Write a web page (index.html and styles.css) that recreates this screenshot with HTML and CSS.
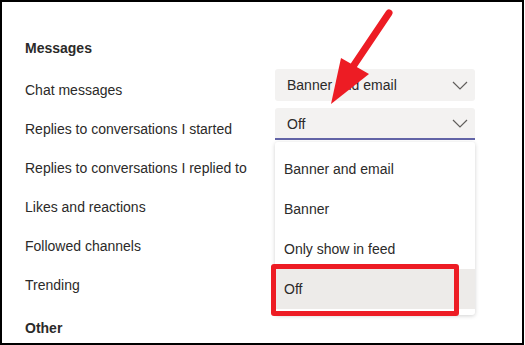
FILE: index.html
```html
<!DOCTYPE html>
<html lang="en">
<head>
    <meta charset="UTF-8">
    <meta name="viewport" content="width=device-width, initial-scale=1.0">
    <title>Notifications</title>
    <link rel="stylesheet" href="styles.css">
</head>
<body>

    <div class="frame">
        <h2 class="section-title">Messages</h2>

        <div class="row">
            <span class="label">Chat messages</span>
            <div class="select">
                <span>Banner and email</span>
                <svg class="chevron" viewBox="0 0 16 9"><path d="M1 1l7 7 7-7"/></svg>
            </div>
        </div>
        <div class="row">
            <span class="label">Replies to conversations I started</span>
            <div class="select open">
                <span>Off</span>
                <svg class="chevron" viewBox="0 0 16 9"><path d="M1 1l7 7 7-7"/></svg>
                <ul class="menu">
                    <li>Banner and email</li>
                    <li>Banner</li>
                    <li>Only show in feed</li>
                    <li class="hover">Off</li>
                </ul>
            </div>
        </div>
        <div class="row"><span class="label">Replies to conversations I replied to</span></div>
        <div class="row"><span class="label">Likes and reactions</span></div>
        <div class="row"><span class="label">Followed channels</span></div>
        <div class="row"><span class="label">Trending</span></div>

        <h2 class="section-title other">Other</h2>

        <!-- annotations -->
        <div class="mark"></div>
        <svg class="arrow" viewBox="0 0 524 345">
            <line x1="389" y1="13" x2="352" y2="68"/>
            <polygon points="341,58 369,74 331,104"/>
        </svg>
    </div>

</body>
</html>
```

FILE: styles.css
```css
body {
    margin: 0;
    font-family: "Liberation Sans", Arial, sans-serif;
    font-size: 14px;
    color: #2b2a29;
    background: #fff;
}
.frame {
    position: relative;
    box-sizing: border-box;
    width: 524px;
    height: 345px;
    border: 2px solid #000;
    padding: 0 0 0 23px;
    overflow: hidden;
}
.section-title {
    margin: 0;
    padding-top: 38px;
    height: 29px;
    font-size: 14px;
    font-weight: bold;
    line-height: 16px;
}
.section-title.other {
    padding-top: 17px;
}
.row {
    display: flex;
    align-items: flex-start;
    height: 39px;
}
.label {
    width: 250px;
    padding-top: 13px;
    line-height: 16px;
    white-space: nowrap;
}
.select {
    position: relative;
    box-sizing: border-box;
    display: flex;
    align-items: center;
    justify-content: space-between;
    width: 200px;
    height: 32px;
    padding: 0 7px 0 12px;
    background: #f3f2f1;
    border-radius: 3px;
}
.select.open {
    border-bottom: 2px solid #6264a7;
    border-radius: 3px 3px 0 0;
    padding-top: 1px;
}
.chevron {
    width: 16px;
    height: 9px;
    fill: none;
    stroke: #605e5c;
    stroke-width: 1.2;
}
.menu {
    position: absolute;
    top: 34px;
    left: 0;
    width: 200px;
    margin: 0;
    padding: 7px 0 6px;
    list-style: none;
    background: #fff;
    border-radius: 3px;
    box-shadow: 0 1px 4px rgba(0, 0, 0, 0.18);
    z-index: 1;
}
.menu li {
    height: 40px;
    line-height: 40px;
    padding-left: 9px;
}
.menu li.hover {
    background: #edebe9;
}
.mark {
    position: absolute;
    left: 269px;
    top: 262px;
    width: 188px;
    height: 52px;
    box-sizing: border-box;
    border: 5px solid #ed1c24;
    border-radius: 3px;
    z-index: 2;
}
.arrow {
    position: absolute;
    left: -2px;
    top: -2px;
    width: 524px;
    height: 345px;
    z-index: 2;
}
.arrow line {
    stroke: #ed1c24;
    stroke-width: 7;
    stroke-linecap: round;
}
.arrow polygon {
    fill: #ed1c24;
}
```
